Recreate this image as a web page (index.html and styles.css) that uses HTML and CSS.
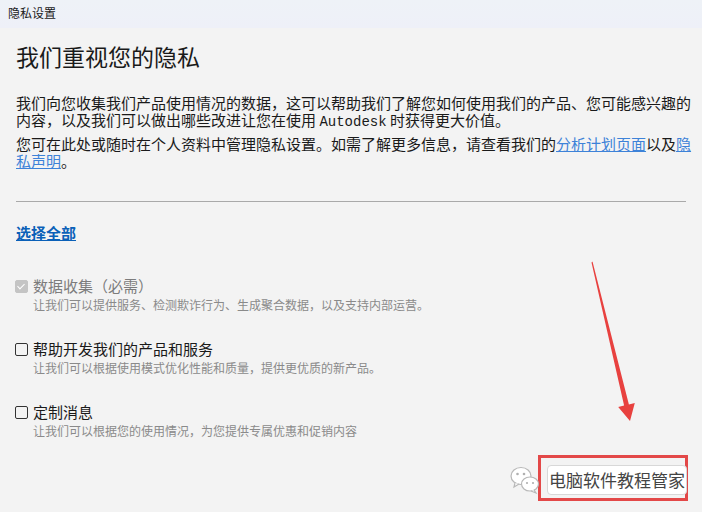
FILE: index.html
```html
<!DOCTYPE html>
<html lang="zh-CN">
<head>
    <meta charset="UTF-8">
    <meta name="viewport" content="width=device-width, initial-scale=1.0">
    <title>隐私设置</title>
    <link rel="stylesheet" href="styles.css">
</head>
<body>

<div class="window">
    <div class="titlebar">隐私设置</div>

    <div class="content">
        <h1>我们重视您的隐私</h1>

        <p class="intro">我们向您收集我们产品使用情况的数据，这可以帮助我们了解您如何使用我们的产品、您可能感兴趣的内容，以及我们可以做出哪些改进让您在使用 <span class="mono">Autodesk</span> 时获得更大价值。</p>
        <p class="intro">您可在此处或随时在个人资料中管理隐私设置。如需了解更多信息，请查看我们的<a href="#">分析计划页面</a>以及<a href="#">隐私声明</a>。</p>

        <hr class="divider">

        <a href="#" class="select-all">选择全部</a>

        <!-- Options -->
        <div class="option disabled">
            <label class="option-label"><span class="box checked"></span>数据收集（必需）</label>
            <div class="option-desc">让我们可以提供服务、检测欺诈行为、生成聚合数据，以及支持内部运营。</div>
        </div>

        <div class="option">
            <label class="option-label"><span class="box"></span>帮助开发我们的产品和服务</label>
            <div class="option-desc">让我们可以根据使用模式优化性能和质量，提供更优质的新产品。</div>
        </div>

        <div class="option">
            <label class="option-label"><span class="box"></span>定制消息</label>
            <div class="option-desc">让我们可以根据您的使用情况，为您提供专属优惠和促销内容</div>
        </div>
    </div>
</div>

<!-- annotation overlay -->
<svg class="arrow" width="702" height="512" viewBox="0 0 702 512">
    <polygon points="591.5,262.5 624.1,405.6 618.2,406.9 630,421 634.8,403.1 628.9,404.4 592.5,261.5" fill="#e8413f"/>
</svg>

<div class="mark-frame"></div>
<div class="mark">
    <svg class="wechat" width="32" height="30" viewBox="0 0 32 30">
        <ellipse cx="12" cy="11" rx="10" ry="8.5" fill="#fff" stroke="#b8b8b8" stroke-width="1.2"/>
        <path d="M6 18 L5 22 L10 19" fill="#fff" stroke="#b8b8b8" stroke-width="1.2"/>
        <circle cx="8.5" cy="9" r="1.3" fill="#b0b0b0"/>
        <circle cx="15" cy="9" r="1.3" fill="#b0b0b0"/>
        <ellipse cx="21" cy="19" rx="8.5" ry="7" fill="#fff" stroke="#b8b8b8" stroke-width="1.2"/>
        <path d="M25 25 L27 28 L22 26" fill="#fff" stroke="#b8b8b8" stroke-width="1.2"/>
        <circle cx="18" cy="18" r="1.1" fill="#b0b0b0"/>
        <circle cx="24" cy="18" r="1.1" fill="#b0b0b0"/>
    </svg>
    <div class="mark-text">电脑软件教程管家</div>
</div>

</body>
</html>
```

FILE: styles.css
```css
body {
    margin: 0;
    background-color: #f3f3f3;
    font-family: "Noto Sans CJK SC", "DejaVu Sans", sans-serif;
    color: #1a1a1a;
}
.window {
    width: 702px;
    height: 512px;
    overflow: hidden;
}
.titlebar {
    height: 28px;
    line-height: 26px;
    padding-left: 8px;
    font-size: 12px;
    background: linear-gradient(to bottom, #eef2f7, #eef0f8);
}
.content {
    padding: 0 16px;
}
h1 {
    margin: 13px 0 0;
    font-size: 23px;
    line-height: 30px;
    font-weight: normal;
}
.intro {
    margin: 0 -10px 0 0;
    font-size: 15px;
    line-height: 17px;
}
.intro:first-of-type {
    margin-top: 23px;
}
.intro + .intro {
    margin-top: 4px;
}
.intro a {
    color: #3d82d8;
}
.mono {
    font-family: "Liberation Mono", monospace;
    font-size: 14px;
}
.divider {
    border: none;
    border-top: 1px solid #a9a9a9;
    margin: 32px 0 0;
}
.select-all {
    display: inline-block;
    margin-top: 21px;
    font-size: 15px;
    line-height: 20px;
    font-weight: bold;
    color: #0a60b8;
}
.option {
    margin-bottom: 26px;
}
.select-all + .option {
    margin-top: 32px;
}
.option-label {
    display: flex;
    align-items: center;
    font-size: 15px;
    line-height: 20px;
    margin-left: -1px;
}
.box {
    width: 11px;
    height: 11px;
    border: 1px solid #333;
    border-radius: 2px;
    margin-right: 5px;
    position: relative;
}
.box.checked {
    background-color: #c4c4c4;
    border-color: #c4c4c4;
}
.box.checked::after {
    content: "";
    position: absolute;
    left: 3px;
    top: 1px;
    width: 3px;
    height: 6px;
    border: solid #fff;
    border-width: 0 1.5px 1.5px 0;
    transform: rotate(45deg);
}
.disabled .option-label {
    color: #7c7c7c;
}
.option-desc {
    margin: 1px 0 0 17px;
    font-size: 12px;
    line-height: 16px;
    color: #8a8a8a;
}
.arrow {
    position: absolute;
    left: 0;
    top: 0;
    pointer-events: none;
}
.mark-frame {
    position: absolute;
    left: 538px;
    top: 455px;
    width: 144px;
    height: 40px;
    border: 3px solid #e34848;
}
.mark {
    position: absolute;
    left: 509px;
    top: 465px;
    display: flex;
    align-items: center;
    gap: 6px;
}
.mark-text {
    background-color: #fff;
    border: 1px solid #d8d8d8;
    border-radius: 4px;
    padding: 0 1px;
    height: 28px;
    line-height: 28px;
    font-size: 17px;
    color: #444;
    text-shadow: 1px 1px 0 #fff, -1px -1px 0 #fff;
}
```
